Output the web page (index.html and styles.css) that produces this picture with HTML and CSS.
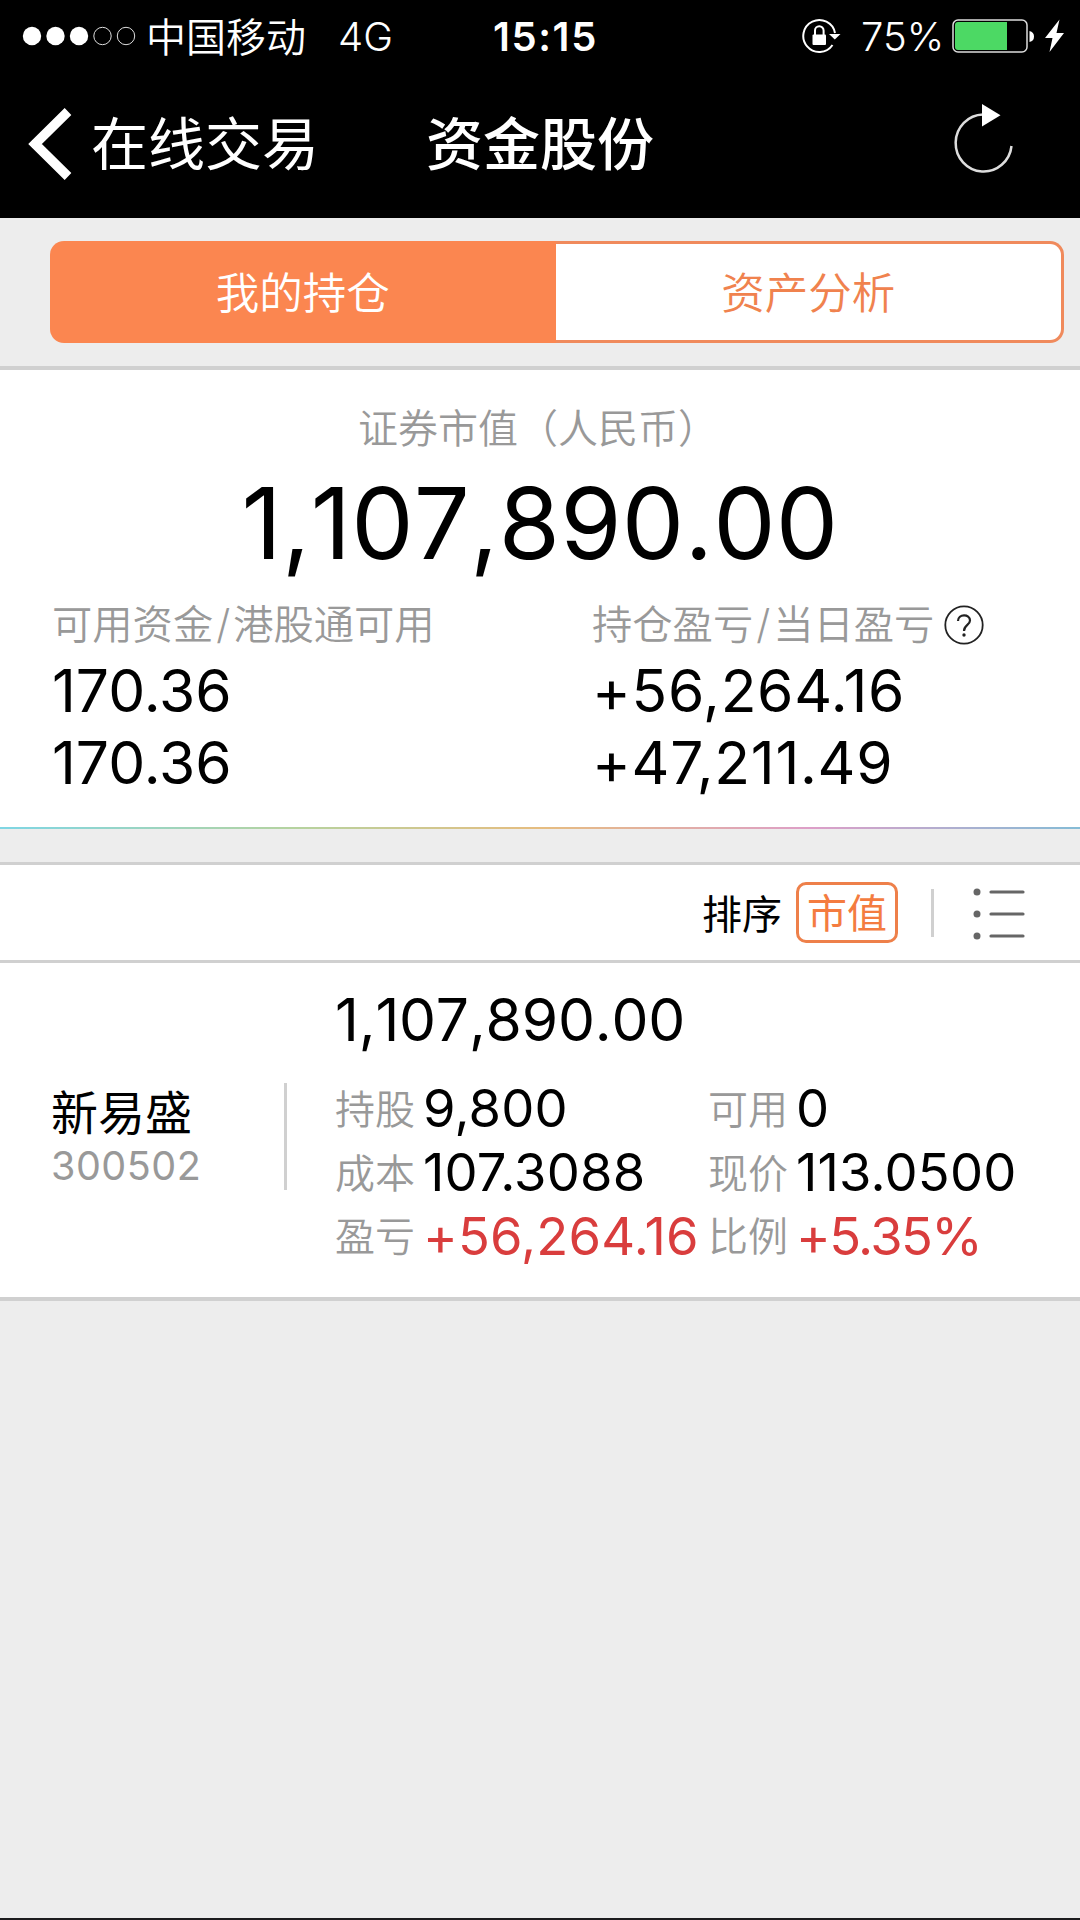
FILE: index.html
```html
<!DOCTYPE html>
<html lang="zh-CN">
<head>
  <meta charset="UTF-8">
  <meta name="viewport" content="width=device-width, initial-scale=1.0">
  <title>资金股份</title>
  <link rel="stylesheet" href="styles.css">
</head>
<body>
  <!-- 状态栏 -->
  <div class="status">
    <svg class="signal" width="114" height="20" viewBox="0 0 114 20">
      <g fill="#fff">
        <circle cx="10" cy="10" r="9.2"/>
        <circle cx="33.5" cy="10" r="9.2"/>
        <circle cx="57" cy="10" r="9.2"/>
      </g>
      <g fill="none" stroke="#ddd" stroke-width="1">
        <circle cx="80.5" cy="10" r="8.7"/>
        <circle cx="104" cy="10" r="8.7"/>
      </g>
    </svg>
    <span class="carrier">中国移动</span>
    <span class="network">4G</span>
    <span class="clock">15:15</span>
    <svg class="lock" width="40" height="38" viewBox="0 0 40 38">
      <path d="M34 16 A16 16 0 1 0 31.5 28" fill="none" stroke="#fff" stroke-width="2"/>
      <path d="M28 17 H39.500 L33.800 22.500 Z" fill="#fff"/>
      <rect x="11.500" y="17.500" width="13.500" height="10.500" rx="1" fill="#fff"/>
      <path d="M14 18 V13.500 A4.300 4.300 0 0 1 22.600 13.500 V18" fill="none" stroke="#fff" stroke-width="2"/>
    </svg>
    <span class="percent">75%</span>
    <svg class="battery" width="116" height="36" viewBox="0 0 116 36">
      <rect x="1" y="2" width="74" height="32" rx="5" fill="none" stroke="#ddd" stroke-width="1.500"/>
      <path d="M6 4 H55 V32 H6 Q3 32 3 29 V7 Q3 4 6 4 Z" fill="#4cd964"/>
      <path d="M77.500 13 Q82 14 82 18.500 Q82 23 77.500 24 Z" fill="#fff"/>
      <path d="M107.500 1.500 L93 20 H100.500 L97.500 34 L112 15 H104.500 Z" fill="#fff"/>
    </svg>
  </div>

  <!-- 导航栏 -->
  <div class="nav">
    <svg class="back-icon" width="46" height="74" viewBox="0 0 46 74">
      <path d="M40 4.500 L7 37 L40 69.500" fill="none" stroke="#fff" stroke-width="9.500"/>
    </svg>
    <span class="back">在线交易</span>
    <span class="title">资金股份</span>
    <svg class="refresh" width="62" height="74" viewBox="0 0 62 74">
      <path d="M30 11.500 A28 28.500 0 1 0 58.500 43" fill="none" stroke="#ddd" stroke-width="2.500"/>
      <path d="M29 1 L47.500 12.200 L29 23.500 Z" fill="#fff"/>
    </svg>
  </div>

  <div class="tabs-wrap">
    <div class="tabs">
      <div class="tab active">我的持仓</div>
      <div class="tab">资产分析</div>
    </div>
  </div>

  <!-- 资产汇总 -->
  <div class="summary">
    <div class="summary-label">证券市值（人民币）</div>
    <div class="total">1,107,890.00</div>
    <div class="funds">
      <div class="fund">
        <div class="fund-label">可用资金<i>/</i>港股通可用</div>
        <div class="num">170.36</div>
        <div class="num">170.36</div>
      </div>
      <div class="fund">
        <div class="fund-label">持仓盈亏<i>/</i>当日盈亏
          <svg class="help" width="42" height="42" viewBox="0 0 42 42">
            <circle cx="21" cy="21" r="18.700" fill="none" stroke="#222" stroke-width="1.800"/>
            <path d="M15 17 C15 9.500 27 9.500 27 16.500 C27 21 21 21 21 27" fill="none" stroke="#222" stroke-width="2.200"/>
            <circle cx="21" cy="31" r="1.700" fill="#222"/>
          </svg>
        </div>
        <div class="num profit">+56,264.16</div>
        <div class="num profit">+47,211.49</div>
      </div>
    </div>
  </div>
  <div class="rainbow"></div>

  <!-- 排序 -->
  <div class="sortbar">
    <span class="sort-label">排序</span>
    <span class="sort-value">市值</span>
    <span class="sort-line"></span>
    <svg class="list-icon" width="54" height="54" viewBox="0 0 54 54">
      <g fill="#666">
        <circle cx="4" cy="5" r="3.500"/>
        <circle cx="4" cy="27" r="3.500"/>
        <circle cx="4" cy="49" r="3.500"/>
      </g>
      <path d="M18 5 H50 M18 27 H50 M18 49 H50" stroke="#666" stroke-width="3.200" stroke-linecap="round"/>
    </svg>
  </div>

  <!-- 持仓明细 -->
  <div class="holding">
    <div class="stock">
      <div class="stock-name">新易盛</div>
      <div class="stock-code">300502</div>
    </div>
    <div class="detail">
      <div class="num amount">1,107,890.00</div>
      <div class="grid">
        <span class="key">持股</span><span class="val">9,800</span>
        <span class="key">可用</span><span class="val">0</span>
        <span class="key">成本</span><span class="val">107.3088</span>
        <span class="key">现价</span><span class="val">113.0500</span>
        <span class="key">盈亏</span><span class="val red">+56,264.16</span>
        <span class="key">比例</span><span class="val red ratio">+5.35%</span>
      </div>
    </div>
  </div>
</body>
</html>
```

FILE: styles.css
```css
* {
  box-sizing: border-box;
}
body {
  margin: 0;
  height: 1920px;
  background: #ededed;
  border-bottom: 2px solid #1c1c1e;
  font-family: Inter, "Noto Sans CJK SC", sans-serif;
  font-size: 40px;
  line-height: 1.2;
  color: #000;
  white-space: nowrap;
  overflow: hidden;
}
svg {
  display: block;
  flex: none;
}

/* 状态栏 */
.status {
  display: flex;
  align-items: center;
  height: 71px;
  padding-left: 22px;
  background: #000;
  color: #fff;
}
.carrier {
  width: 201px;
  padding: 4px 0 0 10px;
  font-weight: 350;
}
.network {
  width: 156px;
  padding: 2px 0 0 1px;
  font-weight: 350;
}
.clock {
  width: 308px;
  padding-top: 2px;
  font-weight: 600;
  letter-spacing: 1.6px;
}
.percent {
  width: 91px;
  margin-left: 20px;
  padding-top: 2px;
  font-weight: 350;
}

/* 导航栏 */
.nav {
  display: flex;
  align-items: center;
  height: 147px;
  padding: 0 0 2px 28px;
  background: #000;
  color: #fff;
  font-size: 57px;
}
.back {
  width: 335px;
  margin-left: 17px;
  padding-top: 3px;
}
.title {
  width: 527px;
  padding-top: 3px;
  font-weight: 500;
}
.refresh {
  margin-top: -7px;
}

/* 切换 */
.tabs-wrap {
  height: 148px;
  padding: 23px 16px 0 50px;
}
.tabs {
  display: flex;
  height: 102px;
}
.tab {
  flex: 1;
  border: 3px solid #f08a5c;
  border-left: none;
  border-radius: 0 14px 14px 0;
  background: #fff;
  line-height: 98px;
  text-align: center;
  font-size: 43.5px;
  font-weight: 350;
  color: #f0824e;
}
.tab.active {
  border: none;
  border-radius: 14px 0 0 14px;
  line-height: 104px;
  background: #fb8650;
  color: #fff;
}

/* 资产汇总 */
.summary {
  height: 461px;
  padding-top: 32px;
  border-top: 4px solid #d0d0d0;
  background: #fff;
}
.summary-label {
  padding-right: 4px;
  line-height: 54px;
  text-align: center;
  font-weight: 350;
  color: #999;
}
.total {
  margin-top: 9px;
  line-height: 116px;
  text-align: center;
  font-size: 99px;
  font-kerning: none;
  letter-spacing: 0.2px;
}
.funds {
  display: flex;
  margin-top: 18px;
  padding-left: 52px;
}
.fund {
  flex: none;
  width: 540px;
}
.fund-label {
  display: flex;
  align-items: center;
  height: 50px;
  margin-bottom: 5.5px;
  line-height: 54px;
  font-size: 40.3px;
  font-weight: 350;
  color: #999;
  padding-top: 2px;
}
.fund-label i {
  width: 20px;
  text-align: center;
  font-style: normal;
}
.help {
  margin-left: 9px;
}
.num {
  line-height: 72.5px;
  font-size: 58.7px;
}
.profit {
  letter-spacing: 0.7px;
}
.rainbow {
  height: 2px;
  background: linear-gradient(90deg, #7fd6e4, #b5d3a0 27%, #e6bd80 50%, #dd9fc8 75%, #85bcd6);
}

/* 排序 */
.sortbar {
  display: flex;
  align-items: center;
  height: 101px;
  margin-top: 33px;
  padding-left: 702px;
  border-top: 3px solid #d0d0d0;
  border-bottom: 3px solid #d0d0d0;
  background: #fff;
}
.sort-label {
  width: 94px;
  padding-top: 4px;
}
.sort-value {
  width: 102px;
  height: 61px;
  border: 3px solid #ee804a;
  border-radius: 10px;
  line-height: 57px;
  text-align: center;
  color: #f47c40;
}
.sort-line {
  width: 3px;
  height: 48px;
  margin-left: 33px;
  background: #d0d0d0;
}
.list-icon {
  margin: 3px 0 0 39px;
}

/* 持仓明细 */
.holding {
  display: flex;
  height: 338px;
  padding-left: 51px;
  border-bottom: 4px solid #d0d0d0;
  background: #fff;
}
.stock {
  width: 236px;
  height: 107px;
  margin-top: 120px;
  border-right: 3px solid #d0d0d0;
}
.stock-name {
  padding-top: 3px;
  line-height: 54px;
  font-size: 47px;
}
.stock-code {
  line-height: 52px;
  font-size: 39.5px;
  letter-spacing: 0.5px;
  color: #999;
}
.detail {
  margin-left: 48px;
  padding-top: 27px;
}
.amount {
  line-height: 60px;
  font-kerning: none;
  letter-spacing: -0.2px;
}
.grid {
  display: grid;
  grid-template-columns: 88px 285px 88px 260px;
  grid-auto-rows: 63.75px;
  align-items: center;
  margin-top: 27px;
}
.key {
  padding-top: 2px;
  font-weight: 350;
  color: #999;
}
.val {
  font-size: 52.5px;
  letter-spacing: 0.2px;
}
.red {
  color: #d93d3d;
}
.ratio {
  letter-spacing: -1.6px;
}
```
